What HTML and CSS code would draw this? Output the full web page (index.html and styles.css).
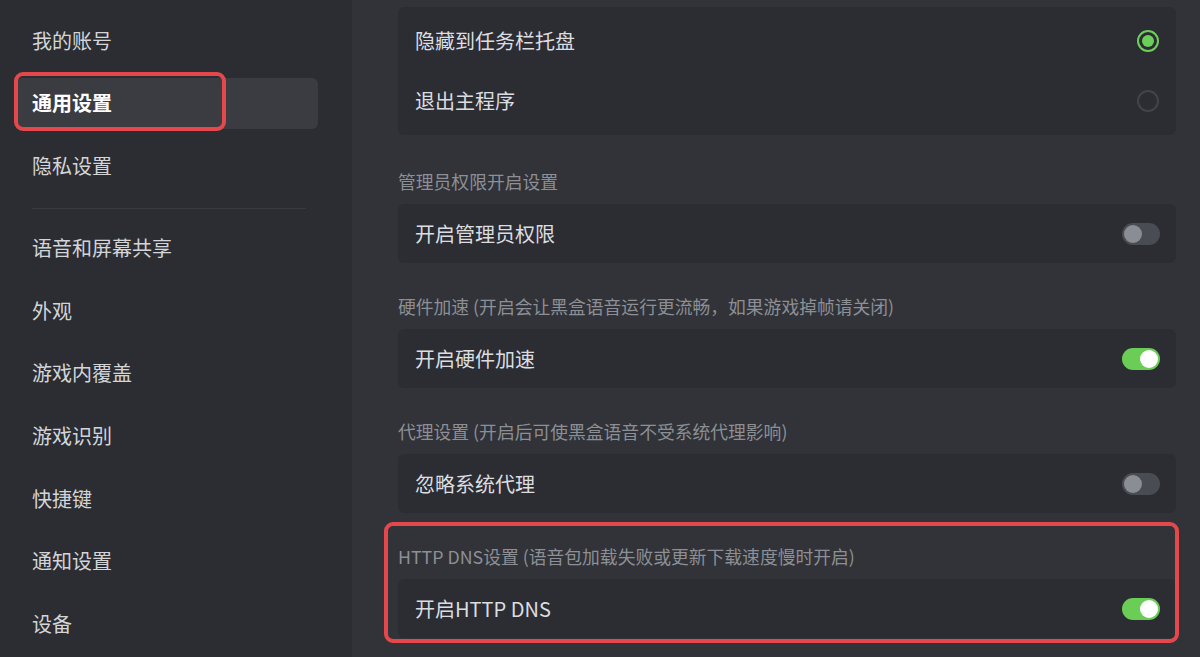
FILE: index.html
```html
<!DOCTYPE html>
<html lang="zh-CN">
<head>
<meta charset="utf-8">
<title>通用设置</title>
<link rel="stylesheet" href="styles.css">
</head>
<body>
<div class="app">
  <nav class="sidebar">
    <div class="nav-group">
      <div class="nav-item">我的账号</div>
      <div class="nav-item active">通用设置<span class="mark mark-nav"></span></div>
      <div class="nav-item">隐私设置</div>
    </div>
    <div class="divider"></div>
    <div class="nav-group">
      <div class="nav-item">语音和屏幕共享</div>
      <div class="nav-item">外观</div>
      <div class="nav-item">游戏内覆盖</div>
      <div class="nav-item">游戏识别</div>
      <div class="nav-item">快捷键</div>
      <div class="nav-item">通知设置</div>
      <div class="nav-item">设备</div>
    </div>
  </nav>
  <main class="content">
    <div class="card card-radios">
      <div class="row"><span>隐藏到任务栏托盘</span><span class="radio on"></span></div>
      <div class="row"><span>退出主程序</span><span class="radio"></span></div>
    </div>

    <section class="section">
      <div class="label">管理员权限开启设置</div>
      <div class="card"><div class="row"><span>开启管理员权限</span><span class="toggle"></span></div></div>
    </section>

    <section class="section">
      <div class="label">硬件加速 (开启会让黑盒语音运行更流畅，如果游戏掉帧请关闭)</div>
      <div class="card"><div class="row"><span>开启硬件加速</span><span class="toggle on"></span></div></div>
    </section>

    <section class="section">
      <div class="label">代理设置 (开启后可使黑盒语音不受系统代理影响)</div>
      <div class="card"><div class="row"><span>忽略系统代理</span><span class="toggle"></span></div></div>
    </section>

    <section class="section">
      <div class="label">HTTP DNS设置 (语音包加载失败或更新下载速度慢时开启)</div>
      <div class="card"><div class="row"><span>开启HTTP DNS</span><span class="toggle on"></span></div></div>
      <span class="mark mark-section"></span>
    </section>
  </main>
</div>
</body>
</html>
```
FILE: styles.css
```css
* { box-sizing: border-box; }
html, body {
  margin: 0;
  height: 100%;
  overflow: hidden;
}
body {
  font-family: "Microsoft YaHei", "Noto Sans CJK SC", "Noto Sans", sans-serif;
  background: #313338;
  color: #dcdde1;
}
.app {
  display: flex;
  height: 657px;
}
.sidebar {
  width: 352px;
  flex: none;
  background: #2b2d32;
  padding: 15px 34px 0 16px;
}
.nav-group {
  display: flex;
  flex-direction: column;
  gap: 11.7px;
}
.nav-item {
  position: relative;
  height: 51px;
  display: flex;
  align-items: center;
  padding-left: 16px;
  font-size: 20px;
  line-height: 24px;
  color: #d3d5d9;
  border-radius: 6px;
}
.nav-item.active {
  background: #3a3c42;
  color: #ffffff;
  font-weight: 700;
}
.divider {
  height: 1px;
  background: #383a40;
  margin: 17px 12px 13px 16px;
}
.mark {
  position: absolute;
  border: 4px solid #e5484b;
  border-radius: 9px;
  pointer-events: none;
}
.mark-nav {
  left: -2px;
  top: -6px;
  width: 212px;
  height: 59px;
}
.content {
  flex: 1;
  padding: 7px 24px 0 46px;
  display: flex;
  flex-direction: column;
}
.card {
  background: #2b2d32;
  border-radius: 6px;
}
.card-radios {
  padding: 4px 0;
  margin-bottom: 3px;
}
.row {
  height: 59px;
  display: flex;
  align-items: center;
  justify-content: space-between;
  padding: 0 16px 0 17px;
  font-size: 20px;
  line-height: 24px;
  color: #dcdde1;
}
.card-radios .row { height: 60px; }
.section {
  position: relative;
  margin-top: 33px;
}
.label {
  font-size: 17.8px;
  line-height: 20px;
  color: #8c8f95;
  margin-bottom: 13px;
}
.radio {
  width: 22px;
  height: 22px;
  border-radius: 50%;
  border: 2px solid #42444a;
  margin-right: 1px;
  display: flex;
  align-items: center;
  justify-content: center;
}
.radio.on {
  border-color: #6ccf5a;
}
.radio.on::after {
  content: "";
  width: 12px;
  height: 12px;
  border-radius: 50%;
  background: #6ccf5a;
}
.toggle {
  width: 38px;
  height: 22px;
  border-radius: 11px;
  background: #4a4c53;
  padding: 2px;
  display: flex;
  justify-content: flex-start;
}
.toggle::after {
  content: "";
  width: 18px;
  height: 18px;
  border-radius: 50%;
  background: #8b8d94;
}
.toggle.on {
  background: #6acd55;
  justify-content: flex-end;
}
.toggle.on::after {
  background: #ffffff;
}
.mark-section {
  left: -14px;
  top: -24px;
  right: -3px;
  bottom: -5px;
}
```
